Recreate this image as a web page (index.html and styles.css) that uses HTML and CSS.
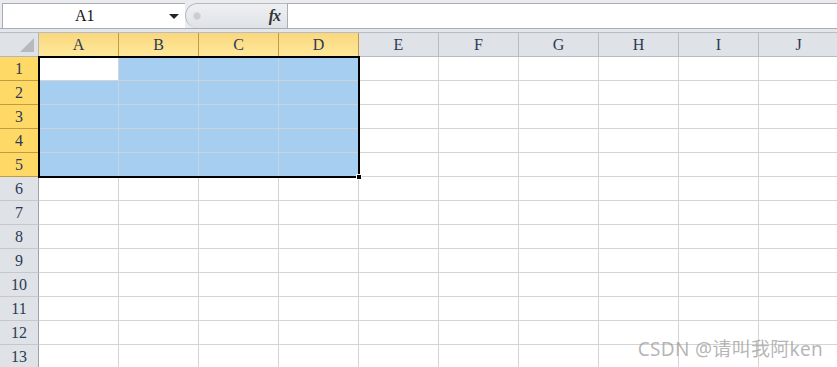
FILE: index.html
```html
<!DOCTYPE html>
<html lang="zh">
<head>
    <meta charset="UTF-8">
    <title>Sheet</title>
    <link rel="stylesheet" href="styles.css">
</head>
<body>
    <div class="formula-bar">
        <div class="name-box">
            <span class="name-text">A1</span>
            <span class="name-arrow"></span>
        </div>
        <div class="fx-pill">
            <span class="pill-dot"></span>
            <span class="fx">fx</span>
        </div>
        <div class="formula-input"></div>
    </div>
    <div class="band"></div>
    <div class="sheet">
        <div class="grid" id="grid"></div>
        <div class="selection"></div>
        <div class="fill-handle"></div>
        <div class="watermark">CSDN @请叫我阿ken</div>
    </div>

    <script>
        const cols = ['A', 'B', 'C', 'D', 'E', 'F', 'G', 'H', 'I', 'J'];
        const grid = document.getElementById('grid');

        function addCell(cls, text) {
            const div = document.createElement('div');
            div.className = cls;
            div.textContent = text || '';
            grid.appendChild(div);
        }

        addCell('corner');
        cols.forEach((c, i) => addCell(i < 4 ? 'col-head sel' : 'col-head', c));

        for (let r = 1; r <= 13; r++) {
            addCell(r <= 5 ? 'row-head sel' : 'row-head', r);
            for (let c = 0; c < cols.length; c++) {
                let cls = 'cell';
                if (r <= 5 && c < 4 && !(r === 1 && c === 0)) cls += ' picked';
                addCell(cls);
            }
        }
    </script>
</body>
</html>
```

FILE: styles.css
```css
* {
    box-sizing: border-box;
}
body {
    margin: 0;
    width: 837px;
    height: 367px;
    overflow: hidden;
    background-color: #fff;
    font-family: "Liberation Serif", "Noto Sans CJK SC", serif;
}
.formula-bar {
    display: flex;
    height: 29px;
    padding-top: 3px;
    background-color: #e9ebee;
    border-bottom: 1px solid #a9acb0;
}
.name-box {
    display: flex;
    align-items: center;
    width: 183px;
    margin-left: 2px;
    padding-left: 72px;
    background-color: #fff;
    border-top: 1px solid #a9acb0;
    border-left: 1px solid #a9acb0;
}
.name-text {
    flex: 1;
    font-family: "Liberation Serif", serif;
    font-size: 16px;
    color: #111;
}
.name-arrow {
    width: 0;
    height: 0;
    margin-right: 6px;
    border-left: 5px solid transparent;
    border-right: 5px solid transparent;
    border-top: 5px solid #222;
}
.fx-pill {
    display: flex;
    align-items: center;
    justify-content: space-between;
    width: 102px;
    padding: 0 7px 0 7px;
    background: linear-gradient(#eef0f3, #dfe2e6);
    border: 1px solid #b5b8bc;
    border-bottom: none;
    border-right: none;
    border-radius: 13px 0 0 13px;
}
.pill-dot {
    width: 8px;
    height: 8px;
    border-radius: 50%;
    background-color: #c9ccd0;
    border: 1px solid #d6d8db;
}
.fx {
    font-style: italic;
    font-weight: bold;
    font-size: 16px;
    color: #333;
    letter-spacing: -1px;
}
.formula-input {
    flex: 1;
    background-color: #fff;
    border-top: 1px solid #a9acb0;
    border-left: 1px solid #a9acb0;
}
.band {
    height: 4px;
    background-color: #e3e6ea;
    border-bottom: 1px solid #b9bcc0;
}
.sheet {
    position: relative;
}
.grid {
    display: grid;
    grid-template-columns: 39px repeat(10, 80px);
    grid-auto-rows: 24px;
}
.corner,
.col-head,
.row-head,
.cell {
    border-right: 1px solid #d4d4d4;
    border-bottom: 1px solid #d4d4d4;
}
.corner {
    position: relative;
    background-color: #dfe2e6;
    border-right: 1px solid #b3b6ba;
    border-bottom: 1px solid #b3b6ba;
}
.corner::after {
    content: "";
    position: absolute;
    right: 4px;
    bottom: 4px;
    border-left: 14px solid transparent;
    border-bottom: 14px solid #b6babe;
}
.col-head,
.row-head {
    display: flex;
    align-items: center;
    justify-content: center;
    font-size: 16px;
    color: #2b3b55;
    background-color: #dfe2e6;
    border-right: 1px solid #b9bcc0;
    border-bottom: 1px solid #b9bcc0;
}
.row-head {
    border-right: 1px solid #9ea2a7;
    border-bottom: 1px solid #c4c7cb;
}
.col-head.sel {
    background: linear-gradient(#f9d77d, #ffe89a);
    border-right: 1px solid #c29a43;
    border-bottom: 1px solid #c29a43;
}
.row-head.sel {
    background-color: #ffd966;
    border-right: 1px solid #c29a43;
    border-bottom: 1px solid #c29a43;
}
.cell.picked {
    background-color: #a6cef0;
    border-color: #cbd2d8;
}
.selection {
    position: absolute;
    left: 38px;
    top: 23px;
    width: 322px;
    height: 122px;
    border: 2px solid #000;
    pointer-events: none;
}
.fill-handle {
    position: absolute;
    left: 356px;
    top: 141px;
    width: 6px;
    height: 6px;
    background-color: #000;
    border: 1px solid #fff;
}
.watermark {
    position: absolute;
    right: 14px;
    bottom: 7px;
    font-family: "Noto Sans", "Noto Sans CJK SC", sans-serif;
    font-size: 19px;
    letter-spacing: 0.3px;
    color: rgba(150, 150, 150, 0.7);
}
```
